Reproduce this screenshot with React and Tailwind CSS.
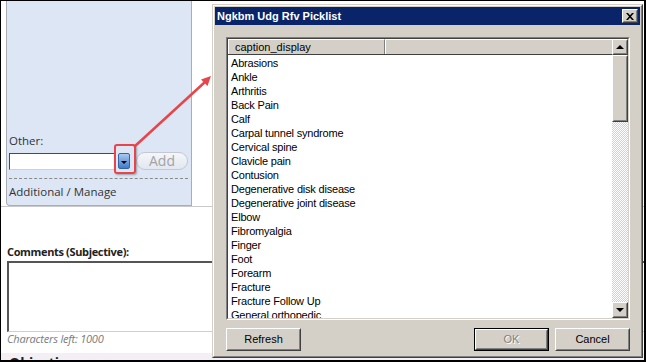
import React from "react";

const items = [
  "Abrasions",
  "Ankle",
  "Arthritis",
  "Back Pain",
  "Calf",
  "Carpal tunnel syndrome",
  "Cervical spine",
  "Clavicle pain",
  "Contusion",
  "Degenerative disk disease",
  "Degenerative joint disease",
  "Elbow",
  "Fibromyalgia",
  "Finger",
  "Foot",
  "Forearm",
  "Fracture",
  "Fracture Follow Up",
  "General orthopedic",
  "Hand",
];

function Raised({ className = "", inner = "", children }) {
  return (
    <div className={`border border-white border-r-[#404040] border-b-[#404040] ${className}`}>
      <div className={`w-full h-full border border-[#d4d0c8] border-r-[#808080] border-b-[#808080] bg-[#d4d0c8] ${inner}`}>
        {children}
      </div>
    </div>
  );
}

function WinButton({ children, def, disabled }) {
  const btn = (
    <Raised className="w-full h-full" inner="flex items-center justify-center">
      <span
        className={
          disabled
            ? "text-[#808080] [text-shadow:1px_1px_0_#fff] leading-[13px]"
            : "text-black leading-[13px]"
        }
      >
        {children}
      </span>
    </Raised>
  );
  return def ? (
    <div className="w-[75px] h-[23px] border border-black">{btn}</div>
  ) : (
    <div className="w-[75px] h-[23px]">{btn}</div>
  );
}

export default function App() {
  return (
    <div className="relative w-[646px] h-[362px] overflow-hidden bg-white border-t border-l border-r-2 border-b-2 border-black">
      {/* left page content */}
      <div className="flex flex-col [font-family:'Open_Sans','Noto_Sans',sans-serif]">
        <div className="border-b border-[#c9c9c9] pl-[5px] pr-[300px]">
          <div className="w-[186px] h-[205px] bg-[#dde6f5] border-l border-r border-b border-[#a9adb5] rounded-bl-[4px] flex flex-col justify-end px-[2px] pb-[6px]">
            <div className="text-[11.5px] leading-[14px] text-[#333]">Other:</div>
            <div className="mt-[4px] flex items-center h-[18px]">
              <div className="w-[107px] h-[17px] bg-white border border-[#d0d0d0] border-t-[#4a4a4a] border-l-[#4a4a4a]" />
              <div className="ml-[2px] w-[12px] h-[16px] rounded-[2px] border border-[#3563a8] bg-gradient-to-b from-[#a9c8ef] to-[#3f7ccc] flex items-end justify-center pb-[4px]">
                <div className="w-0 h-0 border-x-[3px] border-x-transparent border-t-[3px] border-t-black" />
              </div>
              <div className="ml-[6px] w-[52px] h-[18px] rounded-full border border-[#c4c8d0] bg-gradient-to-b from-[#f4f6fa] to-[#e2e7f0] flex items-center justify-center text-[14px] leading-none text-[#a3a3a3]">
                Add
              </div>
            </div>
            <div className="mt-[8px] mr-[1px] border-t border-dashed border-[#8a8a8a]" />
            <div className="mt-[6px] text-[11.5px] leading-[14px] text-[#333]">
              Additional / Manage
            </div>
          </div>
        </div>

        <div className="pl-[6px] mt-[38px] text-[11px] leading-[14px] font-bold tracking-[-0.35px] text-[#222]">
          Comments (Subjective):
        </div>
        <div className="ml-[6px] mt-[2px] w-[640px] h-[71px] bg-white border-t-2 border-l-2 border-b border-[#555] border-b-[#cfcfcf]" />
        <div className="pl-[6px] text-[11px] leading-[14px] italic tracking-[-0.2px] text-[#7a7a7a]">
          Characters left: 1000
        </div>
        <div className="mt-[7px] h-[20px] bg-[#f4eff4] pl-[8px] pt-[2px] text-[14px] leading-[16px] font-bold text-[#222]">
          Objective
        </div>
      </div>

      {/* red highlight around dropdown */}
      <div className="absolute left-[113px] top-[143px] w-[22px] h-[30px] border-2 border-[#e8454a] rounded-[3px] shadow-[1px_1px_2px_rgba(0,0,0,0.3)]" />

      {/* arrow */}
      <svg className="absolute left-0 top-0" width="646" height="362">
        <line x1="133" y1="146" x2="204" y2="81" stroke="#e8454a" strokeWidth="2.5" />
        <polygon points="210,75 206.5,85 200,78.5" fill="#e8454a" />
      </svg>

      {/* dialog */}
      <div className="absolute left-[211px] top-[3px] w-[431px] h-[354px] border border-[#d4d0c8] border-r-[#404040] border-b-[#404040] [font-family:'Liberation_Sans',Arial,sans-serif]">
        <div className="w-full h-full border border-white border-r-[#808080] border-b-[#808080] bg-[#d4d0c8] p-[1px] flex flex-col">
          <div className="h-[18px] bg-[#0a246a] flex items-center justify-between pl-[2px] pr-[2px]">
            <span className="text-white font-bold text-[11px] leading-none">
              Ngkbm Udg Rfv Picklist
            </span>
            <Raised className="w-[16px] h-[14px]" inner="flex items-center justify-center">
              <svg width="8" height="7" viewBox="0 0 8 7">
                <path d="M0 0 L2 0 L4 2.2 L6 0 L8 0 L5 3.5 L8 7 L6 7 L4 4.8 L2 7 L0 7 L3 3.5 Z" fill="black" />
              </svg>
            </Raised>
          </div>

          <div className="flex-1 pt-[12px] pl-[11px] pr-[10px] pb-[4px] flex flex-col">
            {/* listbox */}
            <div className="h-[283px] border border-[#808080] border-r-white border-b-white">
              <div className="w-full h-full border border-[#404040] border-r-[#d4d0c8] border-b-[#d4d0c8] bg-white flex">
                <div className="flex-1 flex flex-col overflow-hidden">
                  <div className="h-[16px] flex bg-[#d4d0c8] border-b border-[#404040]">
                    <div className="w-[157px] h-full border-t border-l border-white border-r border-r-[#808080] pl-[6px] text-[11px] leading-[14px] text-black">
                      caption_display
                    </div>
                    <div className="flex-1 h-full border-t border-l border-white" />
                  </div>
                  <div className="flex-1 overflow-hidden pl-[3px] pt-[1px] text-[11px] leading-[14px] tracking-[-0.2px] text-black">
                    {items.map((t) => (
                      <div key={t} className="h-[14px] whitespace-nowrap">
                        {t}
                      </div>
                    ))}
                  </div>
                </div>
                {/* scrollbar */}
                <div className="w-[16px] flex flex-col">
                  <Raised className="w-[16px] h-[16px]" inner="flex items-center justify-center">
                    <div className="w-0 h-0 border-x-[4px] border-x-transparent border-b-[4px] border-b-black" />
                  </Raised>
                  <Raised className="w-[16px] h-[67px]" />
                  <div className="flex-1 bg-[repeating-conic-gradient(#d4d0c8_0_25%,#ffffff_0_50%)] bg-[length:2px_2px]" />
                  <Raised className="w-[16px] h-[16px]" inner="flex items-center justify-center">
                    <div className="w-0 h-0 border-x-[4px] border-x-transparent border-t-[4px] border-t-black" />
                  </Raised>
                </div>
              </div>
            </div>

            <div className="mt-[8px] flex items-center text-[11px] leading-none">
              <WinButton>Refresh</WinButton>
              <div className="flex-1" />
              <WinButton def disabled>
                OK
              </WinButton>
              <div className="w-[6px]" />
              <WinButton>Cancel</WinButton>
            </div>
          </div>
        </div>
      </div>
    </div>
  );
}
